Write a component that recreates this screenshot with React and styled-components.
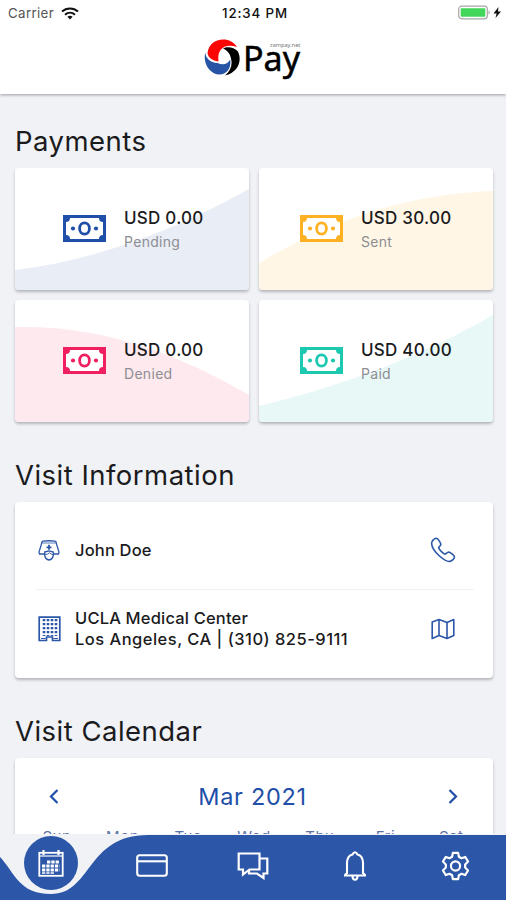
import React from "react";
import styled, { createGlobalStyle } from "styled-components";

const payments = [
  {
    amount: "USD 0.00",
    label: "Pending",
    color: "#1f4fa8",
    tint: "#e9edf6",
    wave: "M0 102C80 93 165 60 234 21V123H0Z",
  },
  {
    amount: "USD 30.00",
    label: "Sent",
    color: "#ffb124",
    tint: "#fff6e5",
    wave: "M0 95C75 50 150 26 234 23V123H0Z",
  },
  {
    amount: "USD 0.00",
    label: "Denied",
    color: "#f01f5f",
    tint: "#fee9ee",
    wave: "M0 27C90 25 165 55 234 95V123H0Z",
  },
  {
    amount: "USD 40.00",
    label: "Paid",
    color: "#1cc8b0",
    tint: "#e7f8f6",
    wave: "M0 106C85 86 165 55 234 15V123H0Z",
  },
];

const days = ["Sun", "Mon", "Tue", "Wed", "Thu", "Fri", "Sat"];

const MoneyIcon = ({ color }) => (
  <svg width="43" height="27" viewBox="0 0 43 27">
    <rect width="43" height="27" fill={color} />
    <path d="M7 3H36A4 4 0 0 0 40 7V20A4 4 0 0 0 36 24H7A4 4 0 0 0 3 20V7A4 4 0 0 0 7 3Z" fill="#fff" />
    <ellipse cx="21.5" cy="13.5" rx="4.9" ry="5.7" fill="none" stroke={color} strokeWidth="2.8" />
    <circle cx="10" cy="13.5" r="2.1" fill={color} />
    <circle cx="33" cy="13.5" r="2.1" fill={color} />
  </svg>
);

const LogoMark = () => (
  <svg width="38" height="38" viewBox="0 0 38 38">
    <path d="M4.5 15C5.5 6.5 12 1.5 20 1.5C26 1.5 31 4 34 9C27 6.5 21 7.5 17.5 12C15 15.5 15 19 15.5 23.5C9 22.5 5 19.5 4.5 15Z" fill="#fb0505" />
    <path d="M2.3 14.5C2.6 20 7 24.5 14.5 25C20 27.5 25 26 27.2 21.5C28.5 29 24.5 36.5 16.5 36.5C7.5 36.5 -0.5 26 2.3 14.5Z" fill="#2754a5" />
    <path d="M20 10.5C24 8 31 9 34.5 13C39.5 21.5 36 34 22 37.5C27.5 33 29.8 27 28 20.5C27 15.5 24.5 12.5 20 10.5Z" fill="#000" />
  </svg>
);

const WifiIcon = () => (
  <svg width="18" height="13" viewBox="0 0 18 13" fill="none" stroke="#111" strokeWidth="2.1">
    <path d="M1 4.6C5.5 .4 12.5 .4 17 4.6" />
    <path d="M4 7.7C7 5 11 5 14 7.7" />
    <path d="M9 12.5L6.4 9.8Q9 7.8 11.6 9.8Z" fill="#111" stroke="none" />
  </svg>
);

const BatteryIcon = () => (
  <svg width="44" height="16" viewBox="0 0 44 16">
    <rect x=".7" y="1.2" width="28.6" height="12.6" rx="3" fill="#fff" stroke="#a6a6a6" strokeWidth="1.2" />
    <rect x="2.7" y="3.2" width="24.6" height="8.6" rx="1" fill="#42d65a" />
    <path d="M30.5 5.3Q33 7.5 30.5 9.7Z" fill="#a6a6a6" />
    <path d="M40.5 2L35.5 8.5H38.6L37.5 13L43 6.5H40Z" fill="#111" />
  </svg>
);

const DoctorIcon = () => (
  <svg width="22" height="21" viewBox="0 0 22 21" fill="none" stroke="#2c56a8" strokeWidth="1.3">
    <path d="M6.5 14H1.5Q.6 12.5 1.5 10.5L3.5 4Q3.5 1.5 5 1.2Q11 .3 17 1.2Q18.5 1.5 18.5 4L20.5 10.5Q21.4 12.5 20.5 14H15.5" />
    <path d="M4 3H18" strokeWidth=".8" />
    <path d="M11 4.8V9.8M8.5 7.3H13.5" strokeWidth="1.8" />
    <path d="M6.7 12L11 10.8L15.3 12V15.5Q14.5 19.5 11 20Q7.5 19.5 6.7 15.5Z" />
    <path d="M7 14.5Q10 14.5 11.5 12.8Q13 14.5 15 14.5" strokeWidth=".9" />
  </svg>
);

const BuildingIcon = () => (
  <svg width="23" height="26" viewBox="0 0 23 26" fill="none" stroke="#2c56a8">
    <path d="M1.2 1.2H21.8V24.5H14.5V21H8.5V24.5H1.2Z" strokeWidth="1.7" />
    <path d="M6 3V20M10 3V20M14 3V20M18 3V20" strokeWidth="2.6" strokeDasharray="2.2 1.8" />
    <path d="M3 22.5H7.5M15.5 22.5H20" strokeWidth="1" />
  </svg>
);

const PhoneIcon = () => (
  <svg width="26" height="26" viewBox="0 0 26 26" fill="none" stroke="#2c56a8" strokeWidth="1.6" strokeLinejoin="round">
    <path d="M6.3 1.3C4.5 1.3 1.5 3.8 1.6 6.5C1.8 10 5.5 15.5 9.5 19C13.5 22.5 17.5 24.7 19.8 24.4C22 24 24.5 21.5 24.5 20C24.4 18.5 20 15 18.5 15C17.3 15.2 16 17 15 17.2C13.8 17 8.9 12.5 8.7 10.8C8.8 9.8 10.8 8.6 10.8 7.5C10.8 5.8 8 1.5 6.3 1.3Z" />
  </svg>
);

const MapIcon = () => (
  <svg width="24" height="22" viewBox="0 0 24 22" fill="none" stroke="#2c56a8" strokeWidth="1.6" strokeLinejoin="round">
    <path d="M1.2 4L8 1.5L16 4.5L22.8 1.5V17.5L16 20.5L8 17.5L1.2 20.5Z" />
    <path d="M8 1.5V17.5M16 4.5V20.5" />
  </svg>
);

const Chevron = ({ d }) => (
  <svg width="10" height="15" viewBox="0 0 10 15" fill="none" stroke="#1f4fa8" strokeWidth="2.2">
    <path d={d} />
  </svg>
);

const CalendarIcon = () => (
  <svg width="26" height="27" viewBox="0 0 26 27" fill="none" stroke="#fff">
    <rect x="1.3" y="2.8" width="23.4" height="23" strokeWidth="1.8" />
    <path d="M1 6H25" strokeWidth="1.2" />
    <path d="M5.5 0V5M20.5 0V5" strokeWidth="2.2" />
    <path d="M9 12H21.5M4 16H21.5M4 20H21.5" strokeWidth="2.8" strokeDasharray="3.3 1" />
    <path d="M4 23H16.5" strokeWidth="1.6" strokeDasharray="3.3 1" />
  </svg>
);

const CardIcon = () => (
  <svg width="32" height="23" viewBox="0 0 32 23" fill="none" stroke="#fff" strokeWidth="2.1">
    <rect x="1.2" y="1.2" width="29.6" height="20.6" rx="2.5" />
    <path d="M1 7.3H31" />
  </svg>
);

const ChatIcon = () => (
  <svg width="32" height="28" viewBox="0 0 32 28" fill="none" stroke="#fff" strokeWidth="2.2">
    <path d="M1.7 1.5H22.5V17.5H12.5L6 22.5V17.5H1.7Z" />
    <path d="M23 6.5H30.3V21.5H26.5V26L20 21.5H12V18" />
  </svg>
);

const BellIcon = () => (
  <svg width="24" height="30" viewBox="0 0 24 30" fill="none" stroke="#fff" strokeWidth="2.1">
    <path d="M4 23V11.5Q4.5 4.5 9.5 3.5Q10.5 1.3 12 1.3Q13.5 1.3 14.5 3.5Q19.5 4.5 20 11.5V23" />
    <path d="M1 24.5H23M3.5 22.5L1.5 24.5M20.5 22.5L22.5 24.5" />
    <path d="M9.5 25Q9.5 28.7 12 28.7Q14.5 28.7 14.5 25" />
  </svg>
);

const GearIcon = () => (
  <svg width="29" height="30" viewBox="0 0 24 24" fill="none" stroke="#fff" strokeWidth="1.8" strokeLinejoin="round">
    <path d="M9.8 1.2H14.2L14.8 4.3L17 5.6L20 4.5L22.4 8.3L20 10.7V13.3L22.4 15.7L20 19.5L17 18.4L14.8 19.7L14.2 22.8H9.8L9.2 19.7L7 18.4L4 19.5L1.6 15.7L4 13.3V10.7L1.6 8.3L4 4.5L7 5.6L9.2 4.3Z" />
    <circle cx="12" cy="12" r="3.8" />
  </svg>
);

const App = () => {
  return (
    <>
      <GlobalStyle />
      <Screen>
        <Header>
          <StatusBar>
            <Carrier>
              Carrier <WifiIcon />
            </Carrier>
            <Clock>12:34 PM</Clock>
            <Battery>
              <BatteryIcon />
            </Battery>
          </StatusBar>
          <Logo>
            <LogoMark />
            <LogoText>
              Pay
              <small>zampay.net</small>
            </LogoText>
          </Logo>
        </Header>
        <Content>
          <SectionTitle>Payments</SectionTitle>
          <PaymentGrid>
            {payments.map((p) => (
              <PaymentCard key={p.label}>
                <Wave viewBox="0 0 234 122" preserveAspectRatio="none">
                  <path d={p.wave} fill={p.tint} />
                </Wave>
                <MoneyIcon color={p.color} />
                <PaymentInfo>
                  <strong>{p.amount}</strong>
                  <span>{p.label}</span>
                </PaymentInfo>
              </PaymentCard>
            ))}
          </PaymentGrid>
          {/* Visit info */}
          <SectionTitle $top={37}>Visit Information</SectionTitle>
          <VisitCard>
            <VisitRow $height={87}>
              <IconCell>
                <DoctorIcon />
              </IconCell>
              <p>John Doe</p>
              <IconCell>
                <PhoneIcon />
              </IconCell>
            </VisitRow>
            <VisitRow $height={79} $line>
              <IconCell>
                <BuildingIcon />
              </IconCell>
              <p>
                UCLA Medical Center
                <VisitAddress>Los Angeles, CA | (310) 825-9111</VisitAddress>
              </p>
              <IconCell>
                <MapIcon />
              </IconCell>
            </VisitRow>
          </VisitCard>
          {/* Visit calendar */}
          <SectionTitle $top={37}>Visit Calendar</SectionTitle>
          <CalendarCard>
            <MonthRow>
              <Chevron d="M8.5 1L2 7.5L8.5 14" />
              <h3>Mar 2021</h3>
              <Chevron d="M1.5 1L8 7.5L1.5 14" />
            </MonthRow>
            <WeekRow>
              {days.map((day) => (
                <span key={day}>{day}</span>
              ))}
            </WeekRow>
          </CalendarCard>
        </Content>
        <TabBar>
          <TabShape viewBox="0 0 506 66">
            <path
              d="M0 23C15 39 19 60 51 60C92 60 86 1 148 1H506V66H0Z"
              fill="#2c57a8"
            />
          </TabShape>
          <Tab>
            <ActiveTab>
              <CalendarIcon />
            </ActiveTab>
          </Tab>
          <Tab>
            <CardIcon />
          </Tab>
          <Tab>
            <ChatIcon />
          </Tab>
          <Tab>
            <BellIcon />
          </Tab>
          <Tab>
            <GearIcon />
          </Tab>
        </TabBar>
      </Screen>
    </>
  );
};

const GlobalStyle = createGlobalStyle`
  * {
    box-sizing: border-box;
  }
  body {
    margin: 0;
    background: #f0f2f6;
    font-family: Inter, "Liberation Sans", sans-serif;
    color: #1b1b1d;
  }
  h2, h3, p {
    margin: 0;
    font-weight: 400;
  }
  svg {
    display: block;
    flex-shrink: 0;
  }
`;

const Screen = styled.div`
  width: 506px;
  height: 900px;
  display: flex;
  flex-direction: column;
  overflow: hidden;
`;

const Header = styled.header`
  height: 94px;
  flex-shrink: 0;
  background: #fff;
  box-shadow: 0 1px 3px rgba(0, 0, 0, 0.35);
`;
const StatusBar = styled.div`
  height: 26px;
  display: grid;
  grid-template-columns: 1fr auto 1fr;
  align-items: center;
  padding: 0 4px 0 8px;
  font-size: 13.3px;
`;
const Carrier = styled.div`
  display: flex;
  align-items: center;
  gap: 7px;
  color: #555;
  letter-spacing: 0.35px;
`;
const Clock = styled.div`
  font-weight: 500;
  color: #111;
  letter-spacing: 0.85px;
`;
const Battery = styled.div`
  display: flex;
  justify-content: flex-end;
`;
const Logo = styled.div`
  display: flex;
  justify-content: center;
  gap: 2px;
  padding: 12px 3px 0 0;
  height: 68px;
`;
const LogoText = styled.div`
  position: relative;
  font: 400 34px/40px "Noto Sans", sans-serif;
  color: #000;
  -webkit-text-stroke: 0.5px #000;
  small {
    position: absolute;
    top: 3px;
    left: 27px;
    font: 400 5.6px/8px "Noto Sans", sans-serif;
    color: #777;
    -webkit-text-stroke: 0;
  }
`;

const Content = styled.main`
  flex: 1;
  min-height: 0;
  overflow: hidden;
  padding: 31px 13px 0 15px;
`;
const SectionTitle = styled.h2`
  margin-top: ${({ $top = 0 }) => $top}px;
  height: 43px;
  font-size: 27.5px;
  line-height: 32px;
  letter-spacing: 0.48px;
`;

const Card = styled.section`
  background: #fff;
  border-radius: 4px;
  box-shadow: 0 2px 3px rgba(0, 0, 0, 0.25);
`;
const PaymentGrid = styled.div`
  display: grid;
  grid-template-columns: 1fr 1fr;
  grid-auto-rows: 122px;
  gap: 10px;
`;
const PaymentCard = styled(Card)`
  position: relative;
  display: flex;
  align-items: center;
  gap: 18px;
  padding: 0 0 2px 48px;
  overflow: hidden;
  &:nth-child(even) {
    padding-left: 41px;
  }
  > * {
    position: relative;
  }
`;
const Wave = styled.svg`
  && {
    position: absolute;
  }
  inset: 0;
  width: 100%;
  height: 100%;
`;
const PaymentInfo = styled.div`
  padding-top: 4px;
  strong {
    display: block;
    font-size: 17px;
    line-height: 24px;
    font-weight: 450;
    letter-spacing: 0.25px;
  }
  span {
    display: block;
    font-size: 14px;
    line-height: 24px;
    letter-spacing: 0.3px;
    color: #8d8e92;
  }
`;

const VisitCard = styled(Card)`
  height: 176px;
  padding: 0 19px 0 21px;
`;
const VisitRow = styled.div`
  display: grid;
  grid-template-columns: 26px 1fr 26px;
  column-gap: 13px;
  align-items: center;
  height: ${({ $height }) => $height}px;
  padding-top: ${({ $line }) => ($line ? 0 : 9)}px;
  padding-right: 18px;
  border-top: ${({ $line }) => ($line ? "1px solid #f1f1f3" : "none")};
  p {
    font-size: 16.5px;
    line-height: 21px;
    font-weight: 450;
    letter-spacing: 0.17px;
  }
`;
const VisitAddress = styled.span`
  display: block;
  letter-spacing: 0.48px;
`;
const IconCell = styled.div`
  display: flex;
  justify-content: center;
`;

const CalendarCard = styled(Card)`
  height: 300px;
`;
const MonthRow = styled.div`
  display: flex;
  justify-content: space-between;
  align-items: center;
  height: 77px;
  padding: 0 35px 0 34px;
  h3 {
    font-size: 23.5px;
    letter-spacing: 0.7px;
    color: #1f4fa8;
    padding-right: 2px;
  }
`;
const WeekRow = styled.div`
  display: grid;
  grid-template-columns: repeat(7, 1fr);
  padding: 0 9px;
  margin-top: -8px;
  span {
    text-align: center;
    font-size: 15px;
    line-height: 20px;
    letter-spacing: 0.5px;
    color: #5e72a8;
  }
`;

const TabBar = styled.nav`
  position: relative;
  height: 66px;
  flex-shrink: 0;
  display: grid;
  grid-template-columns: repeat(5, 1fr);
  background: #f0f2f6;
`;
const TabShape = styled.svg`
  position: absolute;
  inset: 0;
  width: 100%;
  height: 100%;
`;
const Tab = styled.div`
  position: relative;
  display: flex;
  align-items: center;
  justify-content: center;
  padding: 0 0 3px 1px;
`;
const ActiveTab = styled.div`
  width: 54px;
  height: 54px;
  display: flex;
  align-items: center;
  justify-content: center;
  border-radius: 50%;
  background: #2c57a8;
  margin-bottom: 5px;
`;

export default App;
